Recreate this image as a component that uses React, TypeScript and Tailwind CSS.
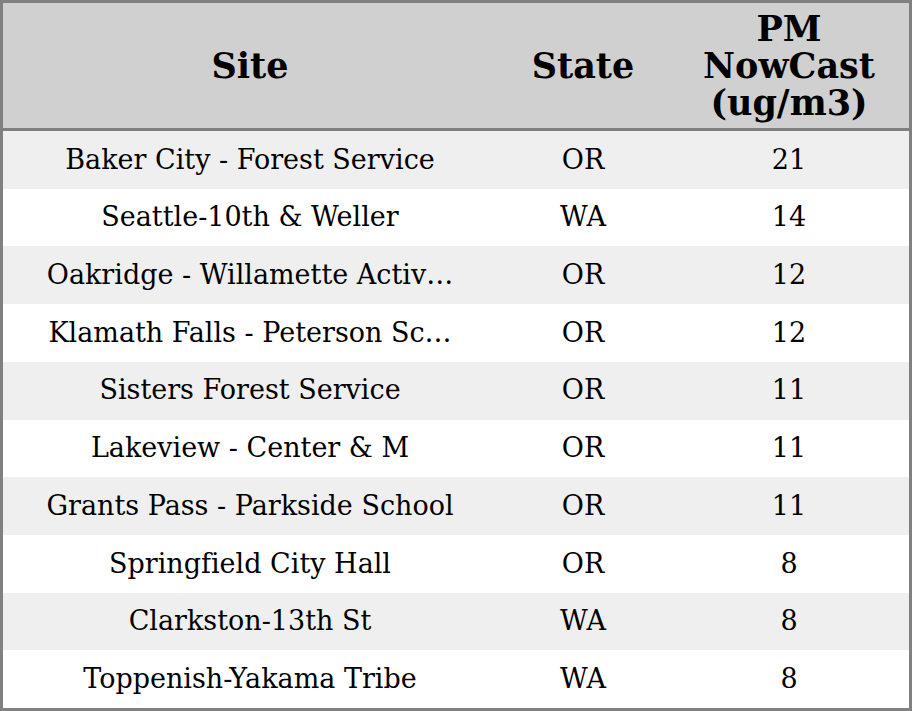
import React from 'react';

const rows: [string, string, string][] = [
  ['Baker City - Forest Service', 'OR', '21'],
  ['Seattle-10th & Weller', 'WA', '14'],
  ['Oakridge - Willamette Activ…', 'OR', '12'],
  ['Klamath Falls - Peterson Sc…', 'OR', '12'],
  ['Sisters Forest Service', 'OR', '11'],
  ['Lakeview - Center & M', 'OR', '11'],
  ['Grants Pass - Parkside School', 'OR', '11'],
  ['Springfield City Hall', 'OR', '8'],
  ['Clarkston-13th St', 'WA', '8'],
  ['Toppenish-Yakama Tribe', 'WA', '8'],
];

export default function App() {
  return (
    <div
      className="w-[912px] h-[711px] bg-white text-black border-[3px] border-[#808080] flex flex-col [font-variant-ligatures:none]"
      style={{ fontFamily: '"DejaVu Serif", serif' }}
    >
      <div className="grid grid-cols-[494px_172px_240px] h-[128px] bg-[#d0d0d0] border-b-[3px] border-[#808080] font-bold text-[35px] leading-[37px]">
        <div className="flex items-center justify-center">Site</div>
        <div className="flex items-center justify-center">State</div>
        <div className="flex items-center justify-center text-center">
          PM
          <br />
          NowCast
          <br />
          (ug/m3)
        </div>
      </div>
      <div className="flex-1 flex flex-col">
        {rows.map(([site, state, val], i) => (
          <div
            key={i}
            className={`flex-1 grid grid-cols-[494px_172px_240px] items-center text-[27px] ${i % 2 === 0 ? 'bg-[#efefef]' : 'bg-white'}`}
          >
            <div className="text-center whitespace-nowrap">{site}</div>
            <div className="text-center">{state}</div>
            <div className="text-center">{val}</div>
          </div>
        ))}
      </div>
    </div>
  );
}
